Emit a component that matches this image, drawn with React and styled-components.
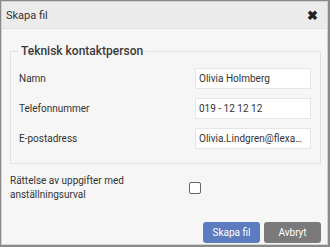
import React from "react";
import styled, { createGlobalStyle } from "styled-components";

const Global = createGlobalStyle`
  html, body {
    margin: 0;
    background: #8a8a8a;
    font-family: Roboto, "Liberation Sans", sans-serif;
  }
`;

const Dialog = styled.div`
  box-sizing: border-box;
  margin: 1px 0 0 1px;
  width: 327px;
  height: 244px;
  background: #f6f6f6;
  border: 1px solid #d2d2d2;
  display: flex;
  flex-direction: column;
`;

const Header = styled.div`
  height: 26px;
  background: #ececec;
  border-bottom: 1px solid #e0e0e0;
  display: flex;
  align-items: center;
  justify-content: space-between;
  padding: 0 9px 0 4px;
  font-size: 11px;
  color: #333;
`;

const Close = styled.span`
  font-size: 13px;
  font-weight: bold;
  color: #222;
`;

const Body = styled.div`
  padding: 15px 6px 0 8px;
  display: flex;
  flex-direction: column;
`;

const Fieldset = styled.fieldset`
  margin: 0;
  padding: 10px 9px 14px 8px;
  border: 1px solid #e2e2e2;
  display: flex;
  flex-direction: column;
  gap: 9px;
`;

const Legend = styled.legend`
  padding: 0 2px;
  margin-left: 0;
  font-size: 12px;
  font-weight: 500;
  color: #3a3a3a;
`;

const Row = styled.div`
  display: flex;
  align-items: center;
  justify-content: space-between;
`;

const Label = styled.span`
  font-size: 10px;
  color: #333;
`;

const Input = styled.input`
  box-sizing: border-box;
  width: 116px;
  height: 21px;
  border: 1px solid #e6e6e6;
  background: #fff;
  padding: 0 3px;
  font-family: inherit;
  font-size: 10px;
  color: #333;
  text-overflow: ellipsis;
  outline: none;
`;

const CheckRow = styled.div`
  display: flex;
  align-items: center;
  margin-top: 10px;
  gap: 26px;
`;

const CheckLabel = styled.span`
  width: 152px;
  font-size: 10px;
  line-height: 14px;
  color: #333;
`;

const Box = styled.span`
  width: 10px;
  height: 10px;
  margin-left: 1px;
  border: 1px solid #666;
  border-radius: 2px;
  background: #fff;
`;

const Footer = styled.div`
  display: flex;
  justify-content: flex-end;
  gap: 4px;
  margin-top: 20px;
  padding-right: 0;
`;

const Button = styled.button`
  height: 21px;
  width: ${(p) => p.$w}px;
  border: none;
  border-radius: 3px;
  background: ${(p) => (p.$primary ? "#5d7cbf" : "#7a7a7a")};
  color: #fff;
  font-family: inherit;
  font-size: 10px;
  padding: 0;
`;

export default function App() {
  return (
    <>
      <Global />
      <Dialog>
        <Header>
          <span>Skapa fil</span>
          <Close>✖</Close>
        </Header>
        <Body>
          <Fieldset>
            <Legend>Teknisk kontaktperson</Legend>
            <Row>
              <Label>Namn</Label>
              <Input defaultValue="Olivia Holmberg" />
            </Row>
            <Row>
              <Label>Telefonnummer</Label>
              <Input defaultValue="019 - 12 12 12" />
            </Row>
            <Row>
              <Label>E-postadress</Label>
              <Input defaultValue="Olivia.Lindgren@flexapplications.se" />
            </Row>
          </Fieldset>
          <CheckRow>
            <CheckLabel>Rättelse av uppgifter med anställningsurval</CheckLabel>
            <Box />
          </CheckRow>
          <Footer>
            <Button $primary $w={57}>Skapa fil</Button>
            <Button $w={57}>Avbryt</Button>
          </Footer>
        </Body>
      </Dialog>
    </>
  );
}
